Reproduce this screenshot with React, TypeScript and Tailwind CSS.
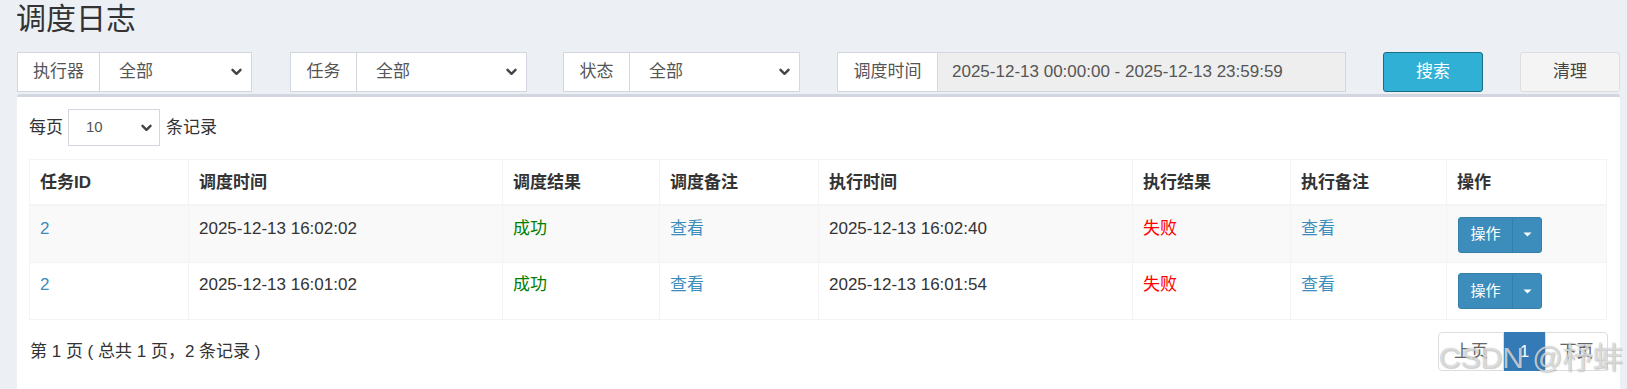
import React from "react";

const FONT = '"Liberation Sans", "Noto Sans CJK SC", Arial, sans-serif';

function Chevron({ className = "" }: { className?: string }) {
  return (
    <svg width="11" height="8" viewBox="0 0 11 8" className={className}>
      <polyline points="1.5,1.8 5.5,5.8 9.5,1.8" fill="none" stroke="#444" strokeWidth="2.4" strokeLinecap="round" strokeLinejoin="round" />
    </svg>
  );
}

function FilterSelect({ label, labelW, w, ml }: { label: string; labelW: string; w: string; ml: string }) {
  return (
    <div className={`flex h-[40px] ${w} ${ml} border border-[#d2d6de] bg-white text-[17px] text-[#555]`}>
      <div className={`flex items-center justify-center ${labelW} border-r border-[#d2d6de] shrink-0`}>{label}</div>
      <div className="flex flex-1 items-center justify-between pl-[19px] pr-[9px]">
        <span>全部</span>
        <Chevron />
      </div>
    </div>
  );
}

function OpButton() {
  return (
    <div className="flex h-[36px] w-[84px] rounded-[3px] border border-[#367fa9] bg-[#3c8dbc] text-white text-[15px]">
      <div className="flex w-[54px] items-center justify-center border-r border-[#367fa9]">操作</div>
      <div className="flex flex-1 items-center justify-center">
        <svg width="9" height="5" viewBox="0 0 9 5">
          <polygon points="0.5,0.5 8.5,0.5 4.5,4.5" fill="#fff" />
        </svg>
      </div>
    </div>
  );
}

const rows = [
  { id: "2", t1: "2025-12-13 16:02:02", t2: "2025-12-13 16:02:40", bg: "bg-[#f9f9f9]", h: "h-[58px]", pt: "pt-[11px]" },
  { id: "2", t1: "2025-12-13 16:01:02", t2: "2025-12-13 16:01:54", bg: "bg-white", h: "h-[57px]", pt: "pt-[10px]" },
];

export default function App() {
  const th = "border border-[#f4f4f4] border-b-2 px-[10px] pt-[11px] text-left align-top font-bold text-[#333] leading-[24px]";
  return (
    <div className="min-h-[389px] w-[1627px] overflow-hidden bg-[#ecf0f5] text-[17px] text-[#333]" style={{ fontFamily: FONT }}>
      <div className="relative">
        {/* title */}
        <div className="h-[52px] pl-[16px]">
          <h1 className="text-[30px] leading-[37px] font-normal text-[#333]">调度日志</h1>
        </div>

        {/* filter row */}
        <div className="flex h-[40px] items-stretch">
          <FilterSelect label="执行器" labelW="w-[82px]" w="w-[235px]" ml="ml-[17px]" />
          <FilterSelect label="任务" labelW="w-[66px]" w="w-[237px]" ml="ml-[38px]" />
          <FilterSelect label="状态" labelW="w-[66px]" w="w-[237px]" ml="ml-[36px]" />
          <div className="ml-[37px] flex h-[40px] w-[509px] border border-[#d2d6de] text-[17px] text-[#555]">
            <div className="flex w-[100px] shrink-0 items-center justify-center border-r border-[#d2d6de] bg-white">调度时间</div>
            <div className="flex flex-1 items-center bg-[#eeeeee] pl-[14px]">2025-12-13 00:00:00 - 2025-12-13 23:59:59</div>
          </div>
          <button className="ml-[37px] flex h-[40px] w-[100px] items-center justify-center rounded-[3px] border border-[#1b6d85] bg-[#31b0d5] text-[17px] text-white">搜索</button>
          <button className="ml-[37px] flex h-[40px] w-[100px] items-center justify-center rounded-[3px] border border-[#dddddd] bg-[#f4f4f4] text-[17px] text-[#444]">清理</button>
        </div>

        {/* main box */}
        <div className="ml-[17px] mr-[7px] mt-[2px] h-[300px] rounded-[3px] border-t-[3px] border-[#d2d6de] bg-white px-[12px] pt-[12px]">
          <div className="flex h-[37px] items-center">
            <span>每页</span>
            <div className="ml-[5px] flex h-[37px] w-[92px] items-center justify-between border border-[#d2d6de] pl-[17px] pr-[7px] text-[15px] text-[#555]">
              <span>10</span>
              <Chevron />
            </div>
            <span className="ml-[6px]">条记录</span>
          </div>

          <table className="mt-[13px] w-[1577px] table-fixed border-collapse border border-[#f4f4f4]">
            <colgroup>
              <col className="w-[159px]" />
              <col className="w-[314px]" />
              <col className="w-[157px]" />
              <col className="w-[159px]" />
              <col className="w-[314px]" />
              <col className="w-[158px]" />
              <col className="w-[156px]" />
              <col className="w-[160px]" />
            </colgroup>
            <thead>
              <tr className="h-[45px]">
                <th className={th}>任务ID</th>
                <th className={th}>调度时间</th>
                <th className={th}>调度结果</th>
                <th className={th}>调度备注</th>
                <th className={th}>执行时间</th>
                <th className={th}>执行结果</th>
                <th className={th}>执行备注</th>
                <th className={th}>操作</th>
              </tr>
            </thead>
            <tbody>
              {rows.map((r, i) => {
                const td = `border border-[#f4f4f4] px-[10px] ${r.pt} align-top leading-[24px]`;
                return (
                  <tr key={i} className={`${r.h} ${r.bg}`}>
                    <td className={`${td} text-[#3c8dbc]`}>{r.id}</td>
                    <td className={td}>{r.t1}</td>
                    <td className={`${td} text-[#008000]`}>成功</td>
                    <td className={`${td} text-[#3c8dbc]`}>查看</td>
                    <td className={td}>{r.t2}</td>
                    <td className={`${td} text-[#ff0000]`}>失败</td>
                    <td className={`${td} text-[#3c8dbc]`}>查看</td>
                    <td className={`border border-[#f4f4f4] px-[11px] ${r.pt} align-top`}>
                      <OpButton />
                    </td>
                  </tr>
                );
              })}
            </tbody>
          </table>

          <div className="mt-[12px] flex h-[39px] items-center justify-between">
            <span className="pl-[1px]">第 1 页 ( 总共 1 页，2 条记录 )</span>
            <div className="flex h-[39px] text-[17px]">
              <div className="flex w-[66px] items-center justify-center rounded-l-[4px] border border-[#dddddd] text-[#666]">上页</div>
              <div className="flex w-[41px] items-center justify-center border border-[#337ab7] bg-[#337ab7] text-white">1</div>
              <div className="flex w-[63px] items-center justify-center rounded-r-[4px] border border-[#dddddd] text-[#666]">下页</div>
            </div>
          </div>
        </div>

        {/* watermark */}
        <div
          className="pointer-events-none absolute left-[1439px] top-[340px] whitespace-nowrap text-[30px] leading-[36px] text-[rgba(255,255,255,0.65)] [text-shadow:0_0_1px_rgba(90,90,90,0.55),1px_1px_1px_rgba(90,90,90,0.25)]"
        >
          CSDN @杼蚌
        </div>
      </div>
    </div>
  );
}
